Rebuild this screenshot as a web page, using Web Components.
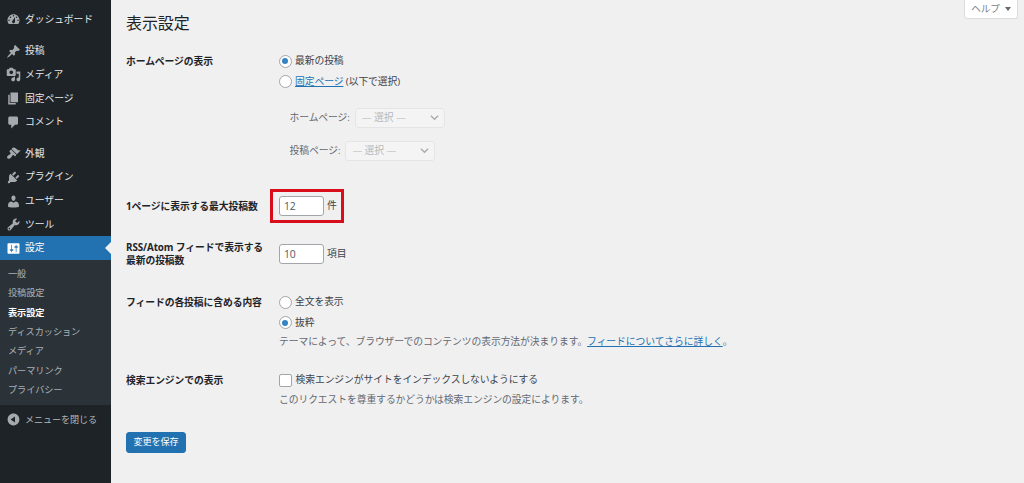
<!DOCTYPE html>
<html lang="ja">
<head>
<meta charset="utf-8">
<title>表示設定</title>
<style>
  html, body { margin: 0; height: 100%; overflow: hidden; background: #f0f0f1; }
  body { font: 9.8px/1.4 "Open Sans", "Noto Sans CJK JP", sans-serif; color: #3c434a; letter-spacing: -0.08px; }
  wp-shell { height: 483px; }
</style>
</head>
<body>
<wp-shell>
  <wp-sidebar slot="side">
    <wp-menu-item icon="dashboard">ダッシュボード</wp-menu-item>
    <wp-menu-item icon="pin" gap>投稿</wp-menu-item>
    <wp-menu-item icon="media">メディア</wp-menu-item>
    <wp-menu-item icon="page">固定ページ</wp-menu-item>
    <wp-menu-item icon="comment">コメント</wp-menu-item>
    <wp-menu-item icon="appearance" gap>外観</wp-menu-item>
    <wp-menu-item icon="plugin">プラグイン</wp-menu-item>
    <wp-menu-item icon="users">ユーザー</wp-menu-item>
    <wp-menu-item icon="tools">ツール</wp-menu-item>
    <wp-menu-item icon="settings" current>設定</wp-menu-item>
    <wp-submenu>
      <wp-sub-item>一般</wp-sub-item>
      <wp-sub-item>投稿設定</wp-sub-item>
      <wp-sub-item current>表示設定</wp-sub-item>
      <wp-sub-item>ディスカッション</wp-sub-item>
      <wp-sub-item>メディア</wp-sub-item>
      <wp-sub-item>パーマリンク</wp-sub-item>
      <wp-sub-item>プライバシー</wp-sub-item>
    </wp-submenu>
    <wp-menu-item icon="collapse" dim>メニューを閉じる</wp-menu-item>
  </wp-sidebar>

  <wp-page-title>表示設定<wp-help-tab slot="help">ヘルプ</wp-help-tab></wp-page-title>

  <wp-row label="ホームページの表示" h="140">
    <wp-radio checked>最新の投稿</wp-radio>
    <wp-radio><a href="#">固定ページ</a> (以下で選択)</wp-radio>
    <wp-page-select first label="ホームページ:" width="90"></wp-page-select>
    <wp-page-select label="投稿ページ:" width="90"></wp-page-select>
  </wp-row>
  <wp-row label="1ページに表示する最大投稿数" h="48" pad="9">
    <wp-number value="12" unit="件" highlight></wp-number>
  </wp-row>
  <wp-row label="RSS/Atom フィードで表示する最新の投稿数" h="53" pad="2">
    <wp-number value="10" unit="項目"></wp-number>
  </wp-row>
  <wp-row label="フィードの各投稿に含める内容" h="78">
    <wp-radio>全文を表示</wp-radio>
    <wp-radio checked>抜粋</wp-radio>
    <wp-desc>テーマによって、ブラウザーでのコンテンツの表示方法が決まります。<a href="#">フィードについてさらに詳しく</a>。</wp-desc>
  </wp-row>
  <wp-row label="検索エンジンでの表示" h="60">
    <wp-checkbox>検索エンジンがサイトをインデックスしないようにする</wp-checkbox>
    <wp-desc>このリクエストを尊重するかどうかは検索エンジンの設定によります。</wp-desc>
  </wp-row>
  <wp-save-button>変更を保存</wp-save-button>
</wp-shell>

<script>
const ICONS = {
  dashboard: 'M3.76 16h12.48c1.1-1.37 1.76-3.11 1.76-5 0-4.42-3.58-8-8-8s-8 3.58-8 8c0 1.89.66 3.63 1.76 5zM10 4c.55 0 1 .45 1 1s-.45 1-1 1-1-.45-1-1 .45-1 1-1zM6 6c.55 0 1 .45 1 1s-.45 1-1 1-1-.45-1-1 .45-1 1-1zm8 0c.55 0 1 .45 1 1s-.45 1-1 1-1-.45-1-1 .45-1 1-1zm-5.37 5.55L12 7v6c0 1.1-.9 2-2 2s-2-.9-2-2c0-.57.24-1.08.63-1.45zM4 10c.55 0 1 .45 1 1s-.45 1-1 1-1-.45-1-1 .45-1 1-1zm12 0c.55 0 1 .45 1 1s-.45 1-1 1-1-.45-1-1 .45-1 1-1z',
  pin: 'M10.44 3.02l1.82-1.82 6.36 6.35-1.83 1.82c-1.05-.68-2.48-.57-3.41.36l-.75.75c-.92.93-1.04 2.35-.35 3.41l-1.83 1.82-2.41-2.41-2.8 2.79c-.42.42-3.38 2.71-3.8 2.29s1.86-3.39 2.28-3.81l2.79-2.79L4.1 9.36l1.83-1.82c1.05.69 2.48.57 3.4-.36l.75-.75c.93-.92 1.05-2.35.36-3.41z',
  media: 'M13 11V4c0-.55-.45-1-1-1h-1.67L9 1H5L3.67 3H2c-.55 0-1 .45-1 1v7c0 .55.45 1 1 1h10c.55 0 1-.45 1-1zM7 4.5c1.38 0 2.5 1.12 2.5 2.5S8.38 9.5 7 9.5 4.5 8.38 4.5 7 5.62 4.5 7 4.5zM14 6h5v10.5c0 1.38-1.12 2.5-2.5 2.5S14 17.88 14 16.5s1.12-2.5 2.5-2.5c.17 0 .34.02.5.05V9h-3V6zm-4 8.05V13h2v3.5c0 1.38-1.12 2.5-2.5 2.5S7 17.88 7 16.5 8.12 14 9.5 14c.17 0 .34.02.5.05z',
  page: 'M6 15V2h10v13H6zm-1 1h8v2H3V5h2v11z',
  comment: 'M5 2h9c1.1 0 2 .9 2 2v7c0 1.1-.9 2-2 2h-2l-5 5v-5H5c-1.1 0-2-.9-2-2V4c0-1.1.9-2 2-2z',
  appearance: 'M14.48 11.06L7.41 3.99l1.5-1.5c.5-.56 2.3-.47 3.51.32 1.21.8 1.43 1.28 2.91 2.1 1.18.64 2.45 1.26 4.45.85zm-.71.71L6.7 4.7 4.93 6.47c-.39.39-.39 1.02 0 1.41l1.06 1.06c.39.39.39 1.03 0 1.42-.6.6-1.43 1.11-2.21 1.69-.35.26-.7.53-1.01.84C1.43 13.23.78 15.05 2.01 16.3s3.06.59 4.4-.76c.31-.3.58-.66.84-1.01.58-.78 1.09-1.61 1.69-2.21.39-.39 1.03-.39 1.42 0l1.06 1.06c.39.39 1.02.39 1.41 0z',
  plugin: 'M13.11 4.36L9.87 7.6 8 5.73l3.24-3.24c.35-.34 1.05-.2 1.56.32.52.51.66 1.21.31 1.55zm-8 1.77l.91-1.12 9.01 9.01-1.19.84c-.71.71-2.63 1.16-3.82 1.16H6.14L4.9 17.26c-.59.59-1.54.59-2.12 0-.59-.58-.59-1.53 0-2.12l1.24-1.24v-3.88c0-1.13.4-3.19 1.09-3.89zm7.26 3.97l3.24-3.24c.34-.35 1.04-.21 1.55.31.52.51.66 1.21.31 1.55l-3.24 3.25z',
  users: 'M10 9.25c-2.27 0-2.73-3.44-2.73-3.44C7 4.02 7.82 2 9.97 2c2.16 0 2.98 2.02 2.71 3.81 0 0-.41 3.44-2.68 3.44zm0 2.57L12.72 10c2.39 0 4.52 2.33 4.52 4.53v2.49s-3.65 1.13-7.24 1.13c-3.65 0-7.24-1.13-7.24-1.13v-2.49c0-2.25 1.94-4.48 4.47-4.48z',
  tools: 'M16.68 9.77c-1.34 1.34-3.3 1.67-4.95.99l-5.41 6.52c-.99.99-2.59.99-3.58 0s-.99-2.59 0-3.57l6.52-5.42c-.68-1.65-.35-3.61.99-4.95 1.28-1.28 3.12-1.62 4.72-1.06l-2.89 2.89 2.82 2.82 2.86-2.87c.53 1.58.18 3.39-1.08 4.65zM3.81 16.21c.4.39 1.04.39 1.43 0 .4-.4.4-1.04 0-1.43-.39-.4-1.03-.4-1.43 0-.39.39-.39 1.03 0 1.43z',
  settings: 'M18 16V4c0-.55-.45-1-1-1H3c-.55 0-1 .45-1 1v12c0 .55.45 1 1 1h14c.55 0 1-.45 1-1zM8 11h1c.55 0 1 .45 1 1s-.45 1-1 1H8v1.5c0 .28-.22.5-.5.5s-.5-.22-.5-.5V13H6c-.55 0-1-.45-1-1s.45-1 1-1h1V5.5c0-.28.22-.5.5-.5s.5.22.5.5V11zm5-2h-1c-.55 0-1-.45-1-1s.45-1 1-1h1V5.5c0-.28.22-.5.5-.5s.5.22.5.5V7h1c.55 0 1 .45 1 1s-.45 1-1 1h-1v5.5c0 .28-.22.5-.5.5s-.5-.22-.5-.5V9z',
  collapse: 'M10 2.16c4.33 0 7.84 3.51 7.84 7.84s-3.51 7.84-7.84 7.84S2.16 14.33 2.16 10 5.71 2.16 10 2.16zm2 11.72V6.12L6.18 9.97z'
};

// small helper so every element below is just markup + styles
function define(name, css, html, init) {
  customElements.define(name, class extends HTMLElement {
    connectedCallback() {
      if (this.shadowRoot) return;
      const root = this.attachShadow({ mode: 'open' });
      const body = typeof html === 'function' ? html(this) : html;
      root.innerHTML = `<style>${css}</style>${body}`;
      if (init) init(this, root);
    }
  });
}

define('wp-shell', `
  :host { display: grid; grid-template-columns: 111px 1fr; }
  main { padding: 0 6px 0 15px; min-width: 0; display: flex; flex-direction: column; }
`, `<slot name="side"></slot><main><slot></slot></main>`);

define('wp-sidebar', `
  :host { display: block; background: #1d2327; height: 483px; padding-top: 8px; box-sizing: border-box; }
`, `<slot></slot>`);

define('wp-menu-item', `
  :host { display: flex; align-items: center; height: 23.7px; color: #e6e7e8; position: relative; font-size: 9.8px; }
  :host([gap]) { margin-top: 7.7px; }
  :host([current]) { background: #2271b1; color: #fff; height: 24px; margin-top: -0.4px; }
  :host([current])::after { content: ""; position: absolute; right: 0; top: 6px; border: 6px solid transparent; border-right-color: #f0f0f1; border-left: 0; }
  :host([dim]) { color: #b4b7ba; margin-top: 1px; height: 28px; font-size: 9.1px; }
  svg { width: 15px; height: 15px; margin: 0 4.5px 0 5.5px; fill: #a7aaad; flex: none; }
  :host([current]) svg { fill: #fff; }
`, el => `<svg viewBox="0 0 20 20"><path fill-rule="evenodd" d="${ICONS[el.getAttribute('icon')]}"/></svg><slot></slot>`);

define('wp-submenu', `
  :host { display: block; background: #2c3338; padding: 4.4px 0 4.6px; }
`, `<slot></slot>`);

define('wp-sub-item', `
  :host { display: flex; align-items: center; height: 19.4px; padding-left: 8px; color: rgba(240,246,252,.65); font-size: 9.2px; }
  :host([current]) { color: #fff; font-weight: 700; }
`, `<slot></slot>`);

define('wp-help-tab', `
  :host { display: flex; align-items: center; justify-content: center; gap: 5px; box-sizing: border-box; width: 54px; height: 19px; background: #fff; border: 1px solid #dcdcde; border-top: 0; border-radius: 0 0 3px 3px; color: #787c82; font-size: 9.6px; line-height: 1.4; }
  i { border: 3px solid transparent; border-top: 4px solid #646970; border-bottom: 0; }
`, `<slot></slot><i></i>`);

define('wp-page-title', `
  :host { display: flex; justify-content: space-between; align-items: flex-start; font-size: 16px; line-height: 24px; margin-bottom: 16px; color: #1d2327; font-weight: 400; }
  h1 { font: inherit; margin: 0; padding-top: 11px; }
`, `<h1><slot></slot></h1><slot name="help"></slot>`);

define('wp-row', `
  :host { display: grid; grid-template-columns: 153px 1fr; box-sizing: border-box; }
  .label { font-weight: 700; color: #1d2327; font-size: 9.8px; line-height: 13px; padding-top: var(--pad, 4px); width: 140px; }
  .field { display: flex; flex-direction: column; align-items: flex-start; min-width: 0; }
`, el => `<div class="label">${el.getAttribute('label')}</div><div class="field"><slot></slot></div>`,
  el => {
    el.style.height = el.getAttribute('h') + 'px';
    if (el.hasAttribute('pad')) el.style.setProperty('--pad', el.getAttribute('pad') + 'px');
  });

define('wp-radio', `
  :host { display: flex; align-items: center; height: 20.4px; gap: 3.5px; margin-left: -0.5px; font-size: 9.8px; color: #3c434a; }
  i { width: 11px; height: 11px; border: 1px solid #a2a5a9; border-radius: 50%; background: #fff; display: grid; place-items: center; flex: none; }
  :host([checked]) i::after { content: ""; width: 6px; height: 6px; border-radius: 50%; background: #3582c4; }
  ::slotted(a) { color: #2271b1; }
`, `<i></i><span><slot></slot></span>`);

define('wp-checkbox', `
  :host { display: flex; align-items: center; height: 20.6px; gap: 3.5px; font-size: 9.8px; color: #3c434a; }
  i { width: 11px; height: 11px; border: 1px solid #a2a5a9; border-radius: 2px; background: #fff; flex: none; }
`, `<i></i><slot></slot>`);

define('wp-page-select', `
  :host { display: flex; align-items: center; margin-left: 10.5px; font-size: 9.8px; color: #646970; height: 33px; }
  :host([first]) { margin-top: 9.5px; }
  .box { box-sizing: border-box; height: 20px; border: 1px solid #e4e5e6; border-radius: 3px; background: #f4f4f5; display: flex; align-items: center; justify-content: space-between; padding: 0 5px 0 6px; color: #b5b8bb; margin-left: 5px; }
  svg { width: 9px; height: 9px; fill: none; stroke: #a7aaad; stroke-width: 1.4; }
`, el => `<span>${el.getAttribute('label')}</span><div class="box" style="width:${el.getAttribute('width')}px"><span>— 選択 —</span><svg viewBox="0 0 10 10"><path d="M1 3l4 4 4-4"/></svg></div>`);

define('wp-number', `
  :host { display: flex; align-items: center; gap: 3px; position: relative; width: max-content; height: 20px; font-size: 9.8px; margin-top: 5px; }
  .input { box-sizing: border-box; width: 45px; height: 20px; background: #fff; border: 1px solid #a2a5a9; border-radius: 3px; color: #50575e; padding: 0 0 0 4px; line-height: 18px; font-size: 10.4px; }
  .mark { position: absolute; left: -9px; top: -7px; width: 74px; height: 34px; box-sizing: border-box; border: 3px solid #d80e1a; }
`, el => `<div class="input">${el.getAttribute('value')}</div><span>${el.getAttribute('unit')}</span>${el.hasAttribute('highlight') ? '<div class="mark"></div>' : ''}`);

define('wp-desc', `
  :host { display: block; color: #646970; font-size: 9.8px; line-height: 18px; }
  ::slotted(a) { color: #2271b1; }
`, `<slot></slot>`);

define('wp-save-button', `
  :host { display: flex; align-items: center; justify-content: center; box-sizing: border-box; width: 60px; height: 20.5px; margin-top: 2px; background: #2271b1; border: 1px solid #2271b1; border-radius: 3px; color: #fff; font-size: 9.1px; }
`, `<slot></slot>`);
</script>
</body>
</html>
